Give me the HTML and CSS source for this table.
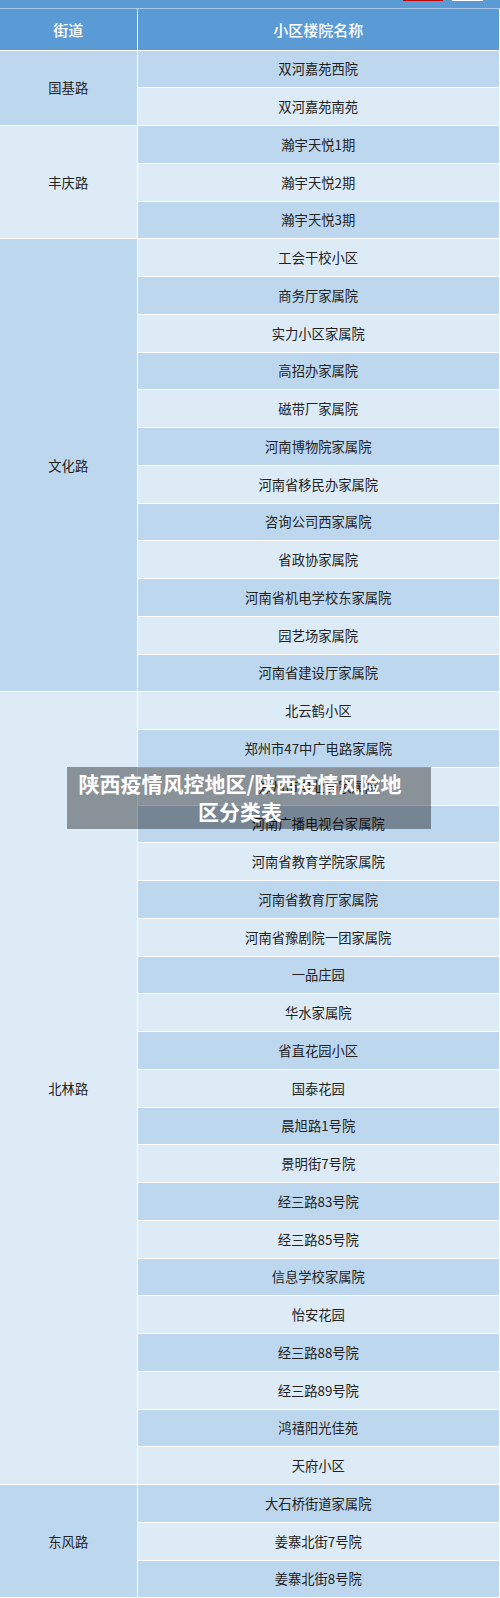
FILE: index.html
```html
<!DOCTYPE html>
<html lang="zh-CN">
<head>
<meta charset="utf-8">
<title>陕西疫情风控地区</title>
<link rel="stylesheet" href="styles.css">
</head>
<body>
<div class="page">
  <div class="topbar">
    <span class="tab tab-red"></span>
    <span class="tab tab-white"></span>
  </div>
  <table class="list">
    <colgroup><col class="c1"><col class="c2"></colgroup>
    <thead>
      <tr class="head"><th>街道</th><th>小区楼院名称</th></tr>
    </thead>
    <tbody>
      <tr class="d"><td class="street d" rowspan="2">国基路</td><td>双河嘉苑西院</td></tr>
      <tr class="l"><td>双河嘉苑南苑</td></tr>
      <tr class="d"><td class="street l" rowspan="3">丰庆路</td><td>瀚宇天悦1期</td></tr>
      <tr class="l"><td>瀚宇天悦2期</td></tr>
      <tr class="d"><td>瀚宇天悦3期</td></tr>
      <tr class="l"><td class="street d" rowspan="12">文化路</td><td>工会干校小区</td></tr>
      <tr class="d"><td>商务厅家属院</td></tr>
      <tr class="l"><td>实力小区家属院</td></tr>
      <tr class="d"><td>高招办家属院</td></tr>
      <tr class="l"><td>磁带厂家属院</td></tr>
      <tr class="d"><td>河南博物院家属院</td></tr>
      <tr class="l"><td>河南省移民办家属院</td></tr>
      <tr class="d"><td>咨询公司西家属院</td></tr>
      <tr class="l"><td>省政协家属院</td></tr>
      <tr class="d"><td>河南省机电学校东家属院</td></tr>
      <tr class="l"><td>园艺场家属院</td></tr>
      <tr class="d"><td>河南省建设厅家属院</td></tr>
      <tr class="l"><td class="street l" rowspan="21">北林路</td><td>北云鹤小区</td></tr>
      <tr class="d"><td>郑州市47中广电路家属院</td></tr>
      <tr class="l"><td>郑州市电业局家属院</td></tr>
      <tr class="d"><td>河南广播电视台家属院</td></tr>
      <tr class="l"><td>河南省教育学院家属院</td></tr>
      <tr class="d"><td>河南省教育厅家属院</td></tr>
      <tr class="l"><td>河南省豫剧院一团家属院</td></tr>
      <tr class="d"><td>一品庄园</td></tr>
      <tr class="l"><td>华水家属院</td></tr>
      <tr class="d"><td>省直花园小区</td></tr>
      <tr class="l"><td>国泰花园</td></tr>
      <tr class="d"><td>晨旭路1号院</td></tr>
      <tr class="l"><td>景明街7号院</td></tr>
      <tr class="d"><td>经三路83号院</td></tr>
      <tr class="l"><td>经三路85号院</td></tr>
      <tr class="d"><td>信息学校家属院</td></tr>
      <tr class="l"><td>怡安花园</td></tr>
      <tr class="d"><td>经三路88号院</td></tr>
      <tr class="l"><td>经三路89号院</td></tr>
      <tr class="d"><td>鸿禧阳光佳苑</td></tr>
      <tr class="l"><td>天府小区</td></tr>
      <tr class="d"><td class="street d" rowspan="3">东风路</td><td>大石桥街道家属院</td></tr>
      <tr class="l"><td>姜寨北街7号院</td></tr>
      <tr class="d"><td>姜寨北街8号院</td></tr>
    </tbody>
  </table>
  <div class="caption">陕西疫情风控地区/陕西疫情风险地区分类表</div>
</div>
</body>
</html>
```

FILE: styles.css
```css
* { box-sizing: border-box; }
html, body {
  margin: 0;
  padding: 0;
  background: #ffffff;
}
body {
  font-family: "Noto Sans CJK SC", "Noto Sans", sans-serif;
  color: #222222;
}
.page {
  position: relative;
  width: 500px;
  overflow: hidden;
}
.topbar {
  height: 9px;
  background: #5b9bd5;
  border-bottom: 1px solid #a8c8ea;
  position: relative;
}
.tab {
  position: absolute;
  top: 0;
  height: 1px;
}
.tab-red { left: 403px; width: 40px; background: #c00000; }
.tab-white { left: 452px; width: 31px; background: #ffffff; }

.list {
  width: 500px;
  border-collapse: collapse;
  table-layout: fixed;
  margin: 0;
}
.c1 { width: 137px; }
.list th, .list td {
  border: 1px solid #ffffff;
  text-align: center;
  vertical-align: middle;
  padding: 0;
  font-weight: normal;
}
.list th {
  background: #5b9bd5;
  color: #ffffff;
  font-size: 15px;
  font-weight: 500;
  height: 41px;
  border-top: 0;
}
.list th:first-child, .list td.street { border-left: 0; }
.list tbody td { font-size: 13.3px; }
.list tbody tr { height: 37.75px; }
tr.d td { background: #bdd7ee; }
tr.l td { background: #ddebf7; }
tr td.street.d { background: #bdd7ee; }
tr td.street.l { background: #ddebf7; }

.caption {
  position: absolute;
  left: 67px;
  top: 767px;
  width: 364px;
  height: 62px;
  padding: 2px 28px 0 10px;
  background: rgba(0, 0, 0, 0.38);
  color: #ffffff;
  font-size: 21px;
  font-weight: bold;
  line-height: 28px;
  text-align: center;
}
```
